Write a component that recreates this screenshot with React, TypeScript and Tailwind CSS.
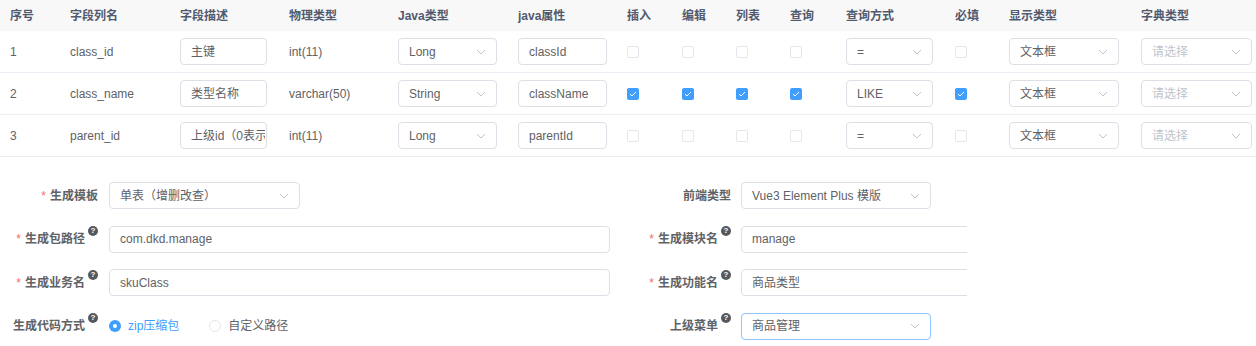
import React from "react";

type Row = {
  no: number;
  column: string;
  desc: string;
  physical: string;
  javaType: string;
  javaField: string;
  insert: boolean;
  edit: boolean;
  list: boolean;
  query: boolean;
  queryType: string;
  required: boolean;
  htmlType: string;
};

const rows: Row[] = [
  { no: 1, column: "class_id", desc: "主键", physical: "int(11)", javaType: "Long", javaField: "classId", insert: false, edit: false, list: false, query: false, queryType: "=", required: false, htmlType: "文本框" },
  { no: 2, column: "class_name", desc: "类型名称", physical: "varchar(50)", javaType: "String", javaField: "className", insert: true, edit: true, list: true, query: true, queryType: "LIKE", required: true, htmlType: "文本框" },
  { no: 3, column: "parent_id", desc: "上级id（0表示顶级）", physical: "int(11)", javaType: "Long", javaField: "parentId", insert: false, edit: false, list: false, query: false, queryType: "=", required: false, htmlType: "文本框" },
];

const headers = ["序号", "字段列名", "字段描述", "物理类型", "Java类型", "java属性", "插入", "编辑", "列表", "查询", "查询方式", "必填", "显示类型", "字典类型"];

const grid =
  "grid grid-cols-[60px_110px_109px_109px_120px_109px_55px_54px_54px_56px_109px_54px_132px_125px]";

function Chevron() {
  return (
    <svg width="10" height="6" viewBox="0 0 10 6" fill="none" className="shrink-0">
      <path d="M1 1l4 4 4-4" stroke="#c0c4cc" strokeWidth="1" />
    </svg>
  );
}

function Input({ value, width, placeholder }: { value?: string; width: string; placeholder?: boolean }) {
  return (
    <div
      className={`${width} h-[27px] border border-[#dcdfe6] rounded-[4px] bg-white pl-[10px] pr-[1px] flex items-center ${placeholder ? "text-[#c0c4cc]" : "text-[#606266]"}`}
    >
      <span className="block w-full overflow-hidden whitespace-nowrap">{value}</span>
    </div>
  );
}

function Select({ value, width, placeholder, focused }: { value: string; width: string; placeholder?: boolean; focused?: boolean }) {
  return (
    <div
      className={`${width} h-[27px] border ${focused ? "border-[#8cc5ff]" : "border-[#dcdfe6]"} rounded-[4px] bg-white pl-[10px] pr-[10px] flex items-center justify-between whitespace-nowrap ${placeholder ? "text-[#c0c4cc]" : "text-[#606266]"}`}
    >
      <span>{value}</span>
      <Chevron />
    </div>
  );
}

function Check({ on }: { on: boolean }) {
  return on ? (
    <div className="w-3 h-3 rounded-[2px] bg-[#409eff] flex items-center justify-center">
      <svg width="8" height="6" viewBox="0 0 8 6" fill="none">
        <path d="M1 3l2 2 4-4" stroke="#fff" strokeWidth="1" />
      </svg>
    </div>
  ) : (
    <div className="w-3 h-3 rounded-[2px] border border-[#e4e7ed] bg-white" />
  );
}

function Help() {
  return (
    <span className="w-[10px] h-[10px] rounded-full bg-[#55585e] text-white text-[8px] leading-[10px] font-bold flex items-center justify-center self-start mt-[-4px] ml-[3px]">
      ?
    </span>
  );
}

function Label({ text, required, help, width }: { text: string; required?: boolean; help?: boolean; width: string }) {
  return (
    <div className={`${width} flex items-center justify-end font-bold text-[#606266] shrink-0`}>
      {required && <span className="text-[#f56c6c] mr-[4px] font-normal">*</span>}
      <span>{text}</span>
      {help && <Help />}
    </div>
  );
}

export default function App() {
  return (
    <div className="w-[1256px] h-[346px] bg-white text-[12px] font-['Liberation_Sans','Noto_Sans_CJK_SC',sans-serif] overflow-hidden">
      {/* table */}
      <div className={`${grid} h-[31px] bg-[#f8f8f9] items-center font-bold text-[#515a6e]`}>
        {headers.map((h) => (
          <div key={h} className="pl-[10px] whitespace-nowrap">
            {h}
          </div>
        ))}
      </div>
      {rows.map((r) => (
        <div key={r.no} className={`${grid} h-[42px] items-center border-b border-[#ebeef5] text-[#606266]`}>
          <div className="pl-[10px]">{r.no}</div>
          <div className="pl-[10px]">{r.column}</div>
          <div className="pl-[10px]">
            <Input value={r.desc} width="w-[87px]" />
          </div>
          <div className="pl-[10px]">{r.physical}</div>
          <div className="pl-[10px]">
            <Select value={r.javaType} width="w-[99px]" />
          </div>
          <div className="pl-[10px]">
            <Input value={r.javaField} width="w-[89px]" />
          </div>
          <div className="pl-[10px]"><Check on={r.insert} /></div>
          <div className="pl-[10px]"><Check on={r.edit} /></div>
          <div className="pl-[10px]"><Check on={r.list} /></div>
          <div className="pl-[10px]"><Check on={r.query} /></div>
          <div className="pl-[10px]">
            <Select value={r.queryType} width="w-[87px]" />
          </div>
          <div className="pl-[10px]"><Check on={r.required} /></div>
          <div className="pl-[10px]">
            <Select value={r.htmlType} width="w-[110px]" />
          </div>
          <div className="pl-[10px]">
            <Select value="请选择" width="w-[111px]" placeholder />
          </div>
        </div>
      ))}

      {/* form */}
      <div className="mt-[25px] flex flex-col gap-[16.67px] text-[#606266]">
        <div className="flex h-[27px] items-center">
          <div className="w-[631px] flex items-center">
            <Label text="生成模板" required width="w-[98px]" />
            <div className="ml-[11px]">
              <Select value="单表（增删改查）" width="w-[191px]" />
            </div>
          </div>
          <div className="flex items-center">
            <Label text="前端类型" width="w-[100px]" />
            <div className="ml-[10px]">
              <Select value="Vue3 Element Plus 模版" width="w-[190px]" />
            </div>
          </div>
        </div>

        <div className="flex h-[27px] items-center">
          <div className="w-[631px] flex items-center">
            <Label text="生成包路径" required help width="w-[98px]" />
            <div className="ml-[11px]">
              <Input value="com.dkd.manage" width="w-[501px]" />
            </div>
          </div>
          <div className="flex items-center">
            <Label text="生成模块名" required help width="w-[100px]" />
            <div className="ml-[10px] w-[226px] overflow-hidden">
              <Input value="manage" width="w-[300px]" />
            </div>
          </div>
        </div>

        <div className="flex h-[27px] items-center">
          <div className="w-[631px] flex items-center">
            <Label text="生成业务名" required help width="w-[98px]" />
            <div className="ml-[11px]">
              <Input value="skuClass" width="w-[501px]" />
            </div>
          </div>
          <div className="flex items-center">
            <Label text="生成功能名" required help width="w-[100px]" />
            <div className="ml-[10px] w-[226px] overflow-hidden">
              <Input value="商品类型" width="w-[300px]" />
            </div>
          </div>
        </div>

        <div className="flex h-[27px] items-center">
          <div className="w-[631px] flex items-center">
            <Label text="生成代码方式" help width="w-[98px]" />
            <div className="ml-[11px] flex items-center">
              <span className="w-3 h-3 rounded-full bg-[#409eff] flex items-center justify-center">
                <span className="w-1 h-1 rounded-full bg-white" />
              </span>
              <span className="ml-[7px] text-[#409eff]">zip压缩包</span>
              <span className="ml-[30px] w-3 h-3 rounded-full border border-[#e4e7ed] bg-white" />
              <span className="ml-[7px]">自定义路径</span>
            </div>
          </div>
          <div className="flex items-center">
            <Label text="上级菜单" help width="w-[100px]" />
            <div className="ml-[10px]">
              <Select value="商品管理" width="w-[190px]" focused />
            </div>
          </div>
        </div>
      </div>
    </div>
  );
}
